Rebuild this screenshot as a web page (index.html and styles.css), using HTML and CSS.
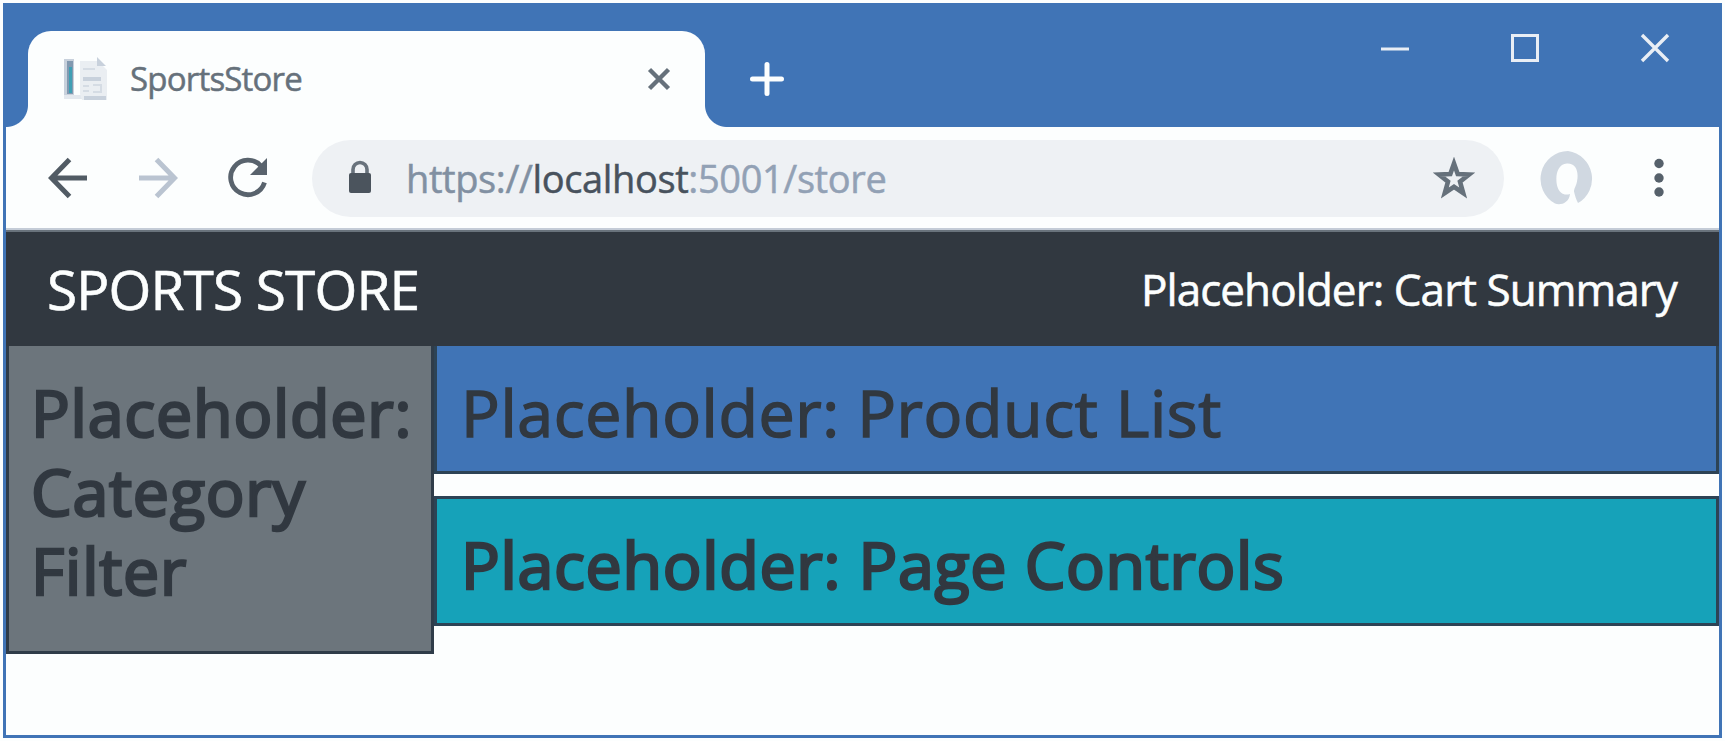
FILE: index.html
```html
<!DOCTYPE html>
<html lang="en">
<head>
<meta charset="utf-8">
<title>SportsStore</title>
<link rel="stylesheet" href="styles.css">
</head>
<body>
<div class="window">
  <header class="tabstrip">
    <div class="tab">
      <svg class="favicon" width="46" height="46" viewBox="0 0 46 46">
        <path d="M1 2h10v36H1z" fill="#c8d1dc"/>
        <path d="M4 4h6v33H4z" fill="#8299b0"/>
        <path d="M6 10h3v26H6z" fill="#3f9fb5"/>
        <path d="M1 38h18v4H1z" fill="#e3e8ee"/>
        <path d="M17 4h18l9 9v30H19l-2-6z" fill="#eaeef2"/>
        <path d="M34 0l9 9h-9zM20 20h18v4H20zM21 39h22v4H21z" fill="#c8d1dc"/>
        <path d="M20 12h12M20 29h6M30 28h8v7h-8M20 34h6" stroke="#d5dce4" stroke-width="2" fill="none"/>
      </svg>
      <span class="tab-title">SportsStore</span>
      <svg class="tab-close" width="24" height="24" viewBox="0 0 24 24"><path d="M2.500 2.500l19 19M21.500 2.500l-19 19" stroke="#66717b" stroke-width="4.400"/></svg>
    </div>
    <svg class="new-tab" width="34" height="34" viewBox="0 0 34 34"><path d="M17 2.500v29M2.500 17h29" stroke="#fcfefe" stroke-width="5" stroke-linecap="round"/></svg>
    <div class="controls">
      <svg width="30" height="30" viewBox="0 0 30 30"><path d="M1 16h28" stroke="#e9eef5" stroke-width="3"/></svg>
      <svg width="30" height="30" viewBox="0 0 30 30"><path d="M2.500 2.500h25v25h-25z" stroke="#e9eef5" stroke-width="3" fill="none"/></svg>
      <svg width="30" height="30" viewBox="0 0 30 30"><path d="M2 2l26 26M28 2L2 28" stroke="#e9eef5" stroke-width="3.400"/></svg>
    </div>
  </header>
  <div class="toolbar">
    <svg class="back" width="40" height="42" viewBox="0 0 40 42"><path d="M39 21H4M21.500 2.500L3.500 21l18 18.500" stroke="#515b64" stroke-width="5" fill="none"/></svg>
    <svg class="forward" width="40" height="42" viewBox="0 0 40 42"><path d="M1 21h35M18.500 2.500l18 18.500-18 18.500" stroke="#bac4d1" stroke-width="5" fill="none"/></svg>
    <svg class="reload" width="42" height="42" viewBox="0 0 42 42"><path d="M37.500 25.500A17.300 17.300 0 1 1 34 9" stroke="#59636d" stroke-width="4.800" fill="none"/><path d="M40 1v17H23z" fill="#59636d"/></svg>
    <div class="address">
      <svg class="lock" width="24" height="34" viewBox="0 0 24 34"><path d="M5 14V9.500a7 7 0 0 1 14 0V14" stroke="#68727c" stroke-width="3.600" fill="none"/><rect x="1" y="13" width="22" height="20" rx="2" fill="#4b545d"/></svg>
      <span class="url"><span class="scheme">https://</span><span class="host">localhost</span><span class="path">:5001/store</span></span>
      <svg class="star" width="42" height="42" viewBox="0 0 42 42"><path d="M21 6.500l3.700 10.500 11.300.500-9 7.200 3.200 11.300L21 29.800l-9.200 6.200 3.200-11.300L6 17.500l11.300-.500z" stroke="#66717b" stroke-width="4.600" fill="none"/></svg>
    </div>
    <svg class="avatar" width="56" height="54" viewBox="0 0 56 54"><path d="M28 0a28 28 0 0 0-13 52.500c5 2 14 0 15-9.500-6 2-10.500-1-12.500-7C15 28 16 13 27 12.500c9-.4 12 8 10 18-1 5-3 7-3 10 1 4 2 8 4 11.500A28 28 0 0 0 28 0z" fill="#d0d8e1"/></svg>
    <svg class="more" width="10" height="40" viewBox="0 0 10 40"><g fill="#56616b"><circle cx="5" cy="5.500" r="4.700"/><circle cx="5" cy="20" r="4.700"/><circle cx="5" cy="34" r="4.700"/></g></svg>
  </div>
  <main class="page">
    <nav class="navbar">
      <span class="brand">SPORTS STORE</span>
      <span class="cart">Placeholder: Cart Summary</span>
    </nav>
    <div class="columns">
      <aside class="filter">Placeholder: Category Filter</aside>
      <section class="content">
        <div class="panel products"><span>Placeholder: Product List</span></div>
        <div class="panel paging"><span>Placeholder: Page Controls</span></div>
      </section>
    </div>
  </main>
</div>
</body>
</html>
```
FILE: styles.css
```css
* { box-sizing: border-box; }
body {
  margin: 0;
  padding: 3px;
  height: 741px;
  background: #fcfefe;
  font-family: "Open Sans", "Noto Sans", sans-serif;
  overflow: hidden;
}
svg { display: block; flex: none; }
.window {
  width: 1719px;
  height: 735px;
  border: 3px solid #4074b6;
  border-top: 0;
  background: #fcfefe;
}
.tabstrip {
  height: 124px;
  display: flex;
  align-items: flex-start;
  margin: 0 -3px;
  background: #4074b6;
}
.tab {
  position: relative;
  width: 677px;
  height: 96px;
  margin: 28px 0 0 25px;
  padding: 0 34px 0 35px;
  display: flex;
  align-items: center;
  background: #fcfefe;
  border-radius: 23px 23px 0 0;
}
.tab::before, .tab::after {
  content: "";
  position: absolute;
  bottom: 0;
  width: 22px;
  height: 22px;
}
.tab::before { left: -22px; background: radial-gradient(circle at 0 0, transparent 21.500px, #fcfefe 22.500px); }
.tab::after { right: -22px; background: radial-gradient(circle at 100% 0, transparent 21.500px, #fcfefe 22.500px); }
.favicon { margin-top: 2px; }
.tab-title {
  margin-left: 21px;
  font-size: 33px;
  line-height: 40px;
  letter-spacing: -0.800px;
  color: #66717b;
  -webkit-text-stroke: 0.500px;
  white-space: nowrap;
}
.tab-close { margin-left: auto; }
.new-tab { margin: 59px 0 0 45px; }
.controls {
  margin: 30px 52px 0 auto;
  display: flex;
  gap: 100px;
}
.toolbar {
  height: 103px;
  display: flex;
  align-items: center;
  padding: 1px 0 0 42px;
  border-bottom: 2px solid #c4ccd7;
}
.forward { margin-left: 50px; }
.reload { margin-left: 49px; }
.address {
  width: 1192px;
  height: 77px;
  margin-left: 43px;
  padding: 0 29px 0 36px;
  display: flex;
  align-items: center;
  border-radius: 39px;
  background: #eef1f4;
}
.url {
  margin-left: 34px;
  font-size: 38px;
  line-height: 50px;
  letter-spacing: -0.380px;
  -webkit-text-stroke: 0.500px;
  white-space: nowrap;
}
.lock { margin-top: -3px; }
.scheme { color: #8190a2; }
.host { color: #48525d; }
.path { color: #92a1b5; }
.star { margin-left: auto; }
.avatar { margin-left: 36px; }
.more { margin-left: 58px; }
.navbar {
  height: 116px;
  padding: 0 42px 0 41px;
  display: flex;
  align-items: center;
  justify-content: space-between;
  background: #313840;
  border-top: 2px solid #69737c;
  color: #fcfefe;
  white-space: nowrap;
  -webkit-text-stroke: 0.600px;
}
.brand {
  font-size: 55px;
  line-height: 74px;
  letter-spacing: -0.850px;
}
.cart {
  font-size: 44px;
  line-height: 60px;
  letter-spacing: -0.930px;
}
.columns { display: flex; align-items: flex-start; }
.filter {
  width: 428px;
  height: 308px;
  padding: 27px 0 0 22px;
  border: 3px solid #2f3c49;
  border-top: 0;
  background: #6c757c;
  color: #313840;
  font-size: 64.500px;
  line-height: 79px;
  letter-spacing: 0.800px;
  -webkit-text-stroke: 2.600px;
}
.content {
  flex: 1;
  display: flex;
  flex-direction: column;
  gap: 22px;
}
.panel {
  border: 3px solid #2d4355;
  padding: 26px 0 0 24px;
  color: #313840;
  font-size: 64.500px;
  line-height: 79px;
  letter-spacing: 0.700px;
  white-space: nowrap;
}
.products {
  height: 128px;
  padding-top: 27px;
  border-top: 0;
  background: #4074b6;
  letter-spacing: 0.600px;
  -webkit-text-stroke: 1.500px;
}
.paging {
  height: 130px;
  background: #16a2b9;
  -webkit-text-stroke: 2.600px;
}
```
